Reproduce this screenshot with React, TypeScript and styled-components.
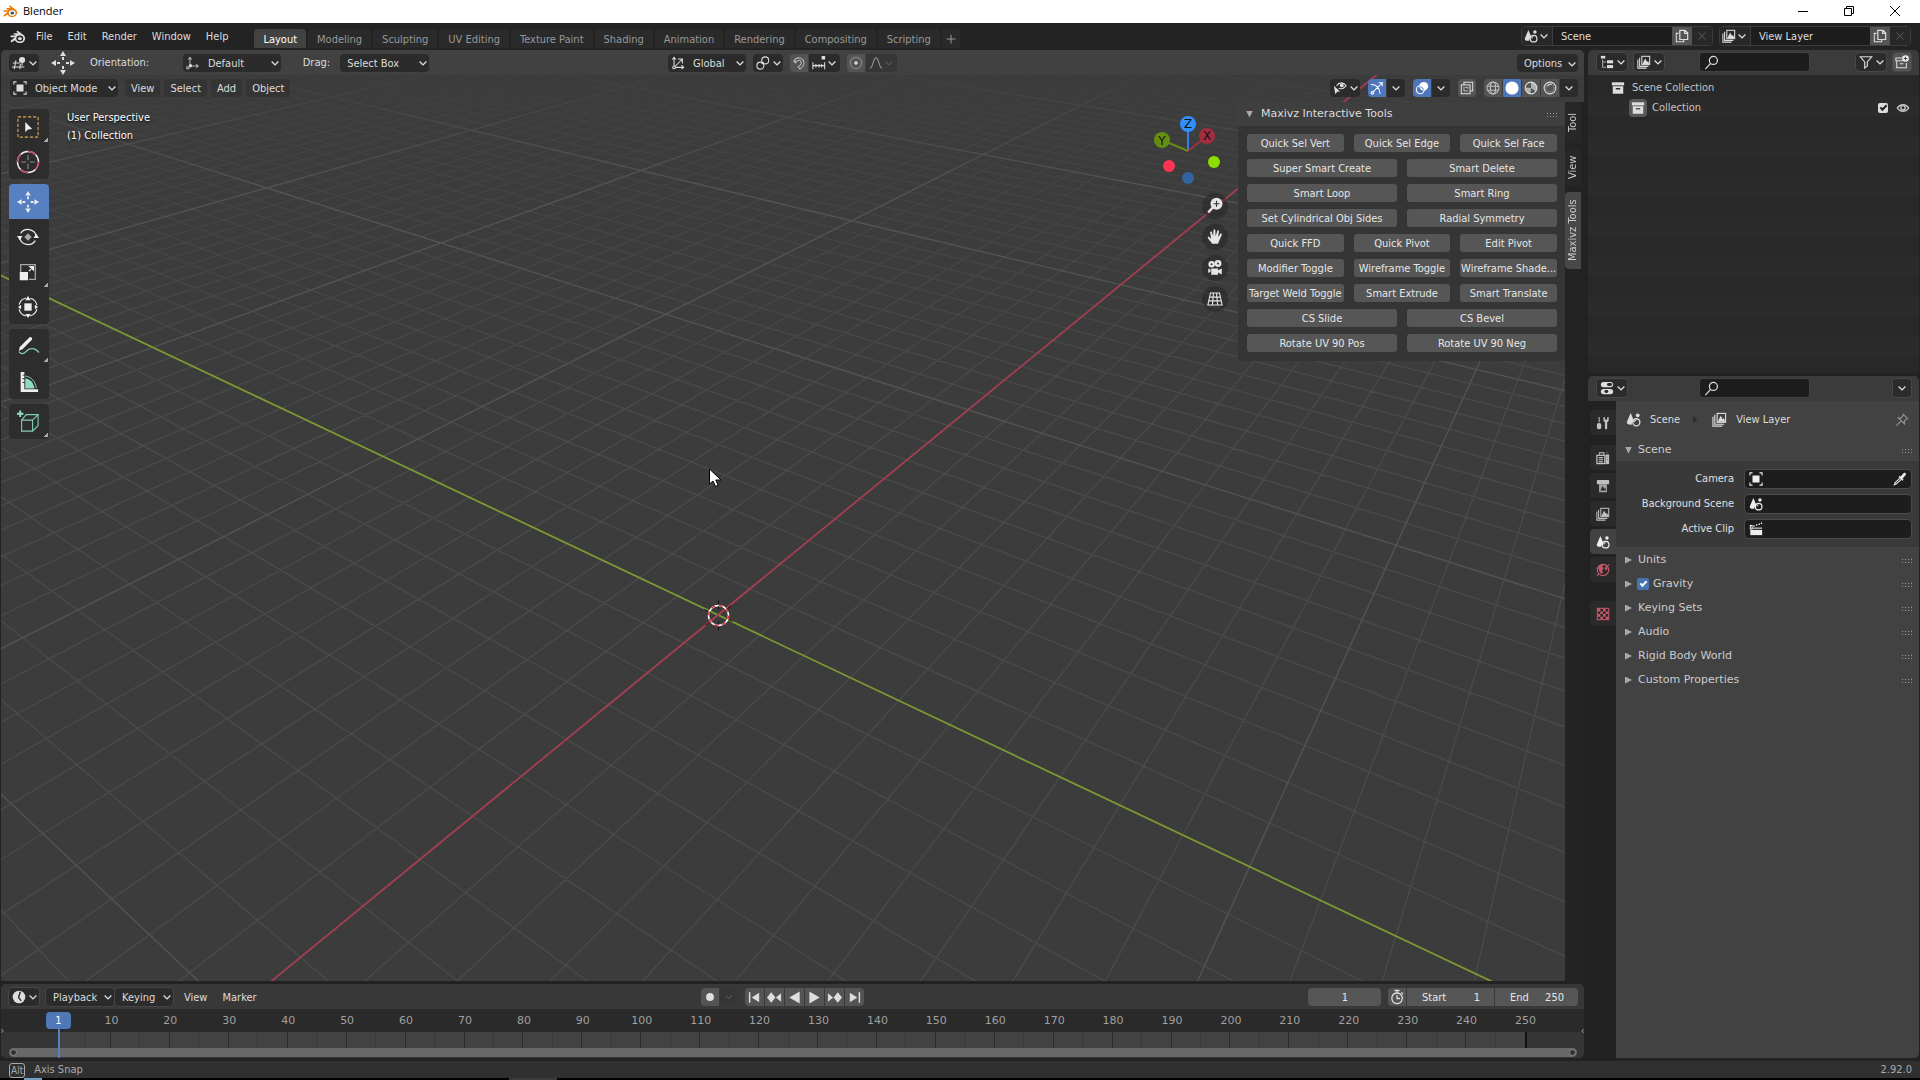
import React from 'react';
import styled, { createGlobalStyle, css } from 'styled-components';

const UI_FONT = '"DejaVu Sans Condensed", "DejaVu Sans", sans-serif';
const TITLE_FONT = '"DejaVu Sans", sans-serif';

const GlobalStyle = createGlobalStyle`
  *, *::before, *::after { box-sizing: border-box; }
  html, body, #root { height: 100%; margin: 0; }
  body { background: #000; overflow: hidden; }
  button, input, select { font: inherit; color: inherit; margin: 0; padding: 0; border: 0; background: none; }
  input { min-width: 0; outline: none; }
`;

/* ---------- icons ---------- */

const IconSvg = styled.svg<{ $size: number }>`
  display: block;
  flex: none;
  width: ${p => p.$size}px;
  height: ${p => p.$size}px;
`;

type IconProps = { name: string; size?: number };

const L = { fill: 'none', stroke: 'currentColor', strokeWidth: 1.2 } as const;

const glyphs: Record<string, React.ReactNode> = {
  blender: (
    <>
      <path d="M5 8.200 1 11.600c-1 .9.2 2.200 1.200 1.500L4.800 11.200A5.400 4.700 0 1 0 12.500 5.300L8 1.900c-1-.7-2 .5-1.100 1.300L8.300 4.300H4.200c-1 0-1 1.500 0 1.500H6L5.200 6.600H1.200c-1.200 0-1.200 1.600 0 1.600z" fill="currentColor" />
      <ellipse cx="9.800" cy="9.600" rx="3.500" ry="3" fill="var(--hole, #232323)" />
      <ellipse cx="9.900" cy="9.600" rx="2" ry="1.700" fill="var(--pupil, currentColor)" />
    </>
  ),
  chevron: <path d="M3.500 6 8 10.500 12.500 6" fill="none" stroke="currentColor" strokeWidth="1.800" />,
  viewport: (
    <g {...L}>
      <path d="M1 8h8M0 12.500h14M4.500 5 2.500 15M9.500 9 9 15" />
      <circle cx="11.500" cy="4.500" r="3.500" fill="currentColor" stroke="none" />
      <path d="M11.500 8v3" />
    </g>
  ),
  orient: (
    <g {...L}>
      <path d="M4.500 2v7M4.500 11.500h9M4.500 11.500l-3 3M2.500 4l2-2.500L6.500 4M11.500 9.500l2.500 2-2.500 2M1 11.500v3h3" opacity=".75" />
      <circle cx="5" cy="11" r="2" fill="currentColor" stroke="none" />
    </g>
  ),
  object: (
    <>
      <path d="M1 4V1h3M12 1h3v3M15 12v3h-3M4 15H1v-3" {...L} />
      <rect x="4" y="4" width="8" height="8" fill="currentColor" />
    </>
  ),
  global: (
    <g {...L}>
      <path d="M3.500 11V1.500M5 13h9.500M1.500 4l2-2.500 2 2.500M12 10.500l2.500 2.500-2.500 2M4.500 12l8-8M8 3.500h5v5" />
      <circle cx="3.500" cy="13" r="1.500" />
    </g>
  ),
  pivot: (
    <g {...L}>
      <circle cx="5" cy="11" r="4" />
      <circle cx="10.500" cy="5" r="4" />
      <circle cx="7.500" cy="8" r="1.500" fill="currentColor" stroke="none" />
    </g>
  ),
  magnet: <path d="M2 6c3-5 8-5 11-1 2 3.500 0 7-4 10l-2-2.500c3-2 4.500-4 3-6.500C8.500 4 6 4.500 4 8zM2.500 5.500l2.300 2" {...L} opacity=".75" />,
  snap: (
    <g {...L}>
      <path d="M1 7v8M4.500 9v4M8 9v4M11 9v4M14.500 7v8M1 11h13.500" />
      <rect x="11" y="0" width="4" height="4" fill="currentColor" stroke="none" />
    </g>
  ),
  prop: (
    <>
      <circle cx="8" cy="8" r="6.500" {...L} opacity=".4" />
      <circle cx="8" cy="8" r="2" fill="currentColor" />
    </>
  ),
  falloff: <path d="M1 14c4 0 3.500-12 7-12s3 12 7 12" {...L} stroke="#999" />,
  visibility: (
    <>
      <path d="M4 5.500C7 1 12 1 15 5.500 12 9 8 9 6.500 8.500" {...L} />
      <circle cx="10" cy="5" r="2.200" fill="currentColor" />
      <path d="M1 5.500 8 12l-3.200.3L2.600 15z" fill="currentColor" />
    </>
  ),
  gizmo: <path d="M1 4c6 0 10 4 10.500 10.500M3 13 14 2M10 2h4v4M1.200 13.500a1.500 1.500 0 1 0 3 0 1.500 1.500 0 1 0-3 0" {...L} />,
  overlay: (
    <>
      <circle cx="6" cy="10" r="4.500" {...L} />
      <circle cx="10" cy="6" r="5" fill="currentColor" />
      <path d="M6 6.500A4.500 4.500 0 0 1 9.800 10" fill="none" stroke="#4772b3" />
    </>
  ),
  xray: (
    <g {...L}>
      <path d="M4.500 4.500V1.500h10v10h-3" />
      <rect x="1.500" y="4.500" width="10" height="10" />
      <path d="M4.500 7v4.500H9M6 7.500h3v2" strokeDasharray="1.500 1" />
    </g>
  ),
  wire: (
    <g {...L} opacity=".8">
      <circle cx="8" cy="8" r="6.800" />
      <ellipse cx="8" cy="8" rx="3" ry="6.800" />
      <path d="M1.500 6h13M1.500 10.500h13" />
    </g>
  ),
  solid: <circle cx="8" cy="8" r="7.500" fill="currentColor" />,
  material: (
    <>
      <circle cx="8" cy="8" r="6.700" {...L} />
      <path d="M8 1.300V8l5.500 4A6.700 6.700 0 0 0 8 1.300zM8 8l-6.500-.5a6.700 6.700 0 0 0 6 7z" fill="currentColor" opacity=".7" />
    </>
  ),
  rendered: (
    <>
      <circle cx="8" cy="8" r="6.700" {...L} />
      <circle cx="8" cy="8" r="4.600" fill="none" stroke="currentColor" strokeDasharray="1.500 1.200" opacity=".7" />
      <path d="M5 6c1-2 3-2.500 5-2" {...L} />
    </>
  ),
  scene: (
    <>
      <path d="M5 1 1 10.500c-.5 1.500.5 2.500 2 2.800l3 .2c.2-2 1-3.300 2.500-4z" fill="currentColor" />
      <circle cx="12.500" cy="3.500" r="2" fill="currentColor" />
      <circle cx="11" cy="11" r="3.800" {...L} strokeWidth={1.4} />
      <path d="M8.800 10.800a2.200 2.200 0 0 1 2-2" {...L} />
    </>
  ),
  layers: (
    <>
      <path d="M1 5v10h10M3 3v10h10" {...L} />
      <rect x="5.500" y="1.500" width="9" height="9.500" {...L} />
      <path d="M6 10.500 9.300 4l2.200 4 1-1.500 1.800 4z" fill="currentColor" />
    </>
  ),
  copy: (
    <>
      <path d="M4 5H1.500v9.500H10V12" {...L} />
      <path d="M5.500 1.500h6l3 3V12h-9zM11 1v4h4" {...L} strokeWidth={1.4} />
    </>
  ),
  close: <path d="m4 4 8 8M12 4l-8 8" {...L} />,
  plus: <path d="M8 3v10M3 8h10" {...L} />,
  outliner: (
    <>
      <rect x="1" y="1" width="5" height="3" fill="currentColor" />
      <path d="M3 5v9h4M3 8h4" {...L} opacity=".7" />
      <rect x="8" y="6" width="7" height="3.500" fill="currentColor" />
      <rect x="8" y="11.500" width="7" height="3.500" fill="currentColor" />
    </>
  ),
  search: (
    <g {...L} strokeWidth={1.3}>
      <circle cx="10" cy="5.800" r="4.300" />
      <path d="m7 9-5.500 6" />
    </g>
  ),
  filter: <path d="M1.500 2h13L9.500 8v4.500L6.500 15V8z" {...L} strokeWidth={1.3} />,
  newcol: (
    <>
      <path d="M9 3.500H1v3h8M2 6.500v8h11V9M5.500 10h4" {...L} />
      <circle cx="12" cy="4" r="3.800" fill="#eee" />
      <path d="M12 2v4M10 4h4" stroke="#333" />
    </>
  ),
  collection: (
    <>
      <rect x="1" y="1.500" width="14" height="3.500" fill="currentColor" />
      <path d="M2 6h12v8.500H2zM5.500 8v1.800h5V8z" fill="currentColor" fillRule="evenodd" />
    </>
  ),
  eye: (
    <>
      <path d="M1.500 8C4.500 3 11.500 3 14.500 8c-3 5-10 5-13 0z" {...L} strokeWidth={1.6} />
      <circle cx="8" cy="7.800" r="2.500" {...L} strokeWidth={1.6} />
    </>
  ),
  properties: (
    <>
      <rect x="1" y="1" width="14" height="6" rx="3" fill="currentColor" />
      <rect x="1" y="9" width="14" height="6" rx="3" fill="currentColor" />
      <rect x="8" y="2.300" width="5.800" height="3.400" rx="1.700" fill="#2b2b2b" />
      <rect x="5" y="10.300" width="4.500" height="3.400" rx="1.700" fill="#2b2b2b" />
    </>
  ),
  pin: <path d="m9.500 1.500 5 5-1.500.5-2.500 2.500.3 3-7-7 3 .3L9 3zM6.500 9.500l-5 5" {...L} />,
  dropper: (
    <>
      <path d="m8 6 4-4.500c2-1.500 3.500.5 2.500 2L10.500 8z" fill="currentColor" />
      <path d="m7 5 4.500 4.500" stroke="currentColor" strokeWidth="1.800" />
      <path d="M8 7 2.500 12l-1 2.500 2.500-1L9.500 8.500" {...L} />
    </>
  ),
  clip: (
    <>
      <rect x="1.500" y="4" width="2" height="4" {...L} />
      <path d="M5 4.500h1.500M8 3.500h1.500M11 2.500h1.500M13.500 1.500H15" stroke="currentColor" strokeWidth="1.800" />
      <path d="M4 7h11" {...L} />
      <rect x="1.500" y="9" width="13.500" height="6" fill="currentColor" />
    </>
  ),
  tools: (
    <>
      <path d="M3 1h1.200v6H3z" fill="currentColor" />
      <rect x="1" y="8" width="5" height="7" rx="2" fill="currentColor" />
      <path d="M8.500 1v3.500c0 1.500 1 2 1.700 2.500v7c0 1.500 2.600 1.500 2.600 0V7c1-.5 1.700-1 1.700-2.500V1l-1.700.5V4h-2.600V1.500z" fill="currentColor" />
    </>
  ),
  render: (
    <>
      <path d="M1 5h9v9.500H1zM4 4V2h5v2M3 7.500h5M3 10h5M3 12.500h5" {...L} strokeWidth={1.4} />
      <rect x="11" y="4" width="4" height="11" fill="currentColor" />
      <path d="M12 7h2M12 10h2M12 1.500h2" stroke="#777" />
    </>
  ),
  output: (
    <>
      <rect x="1" y="1" width="14" height="5" rx="1" fill="currentColor" />
      <path d="M3.500 6v9h9V6z" fill="currentColor" opacity=".8" />
      <path d="m5 13 2.500-5 2 3 1-1 1 3z" fill="#2b2b2b" />
    </>
  ),
  world: (
    <>
      <circle cx="8" cy="8" r="6.500" {...L} strokeWidth={1.3} />
      <path d="M3 4c2-2 4-2.500 5-2L7.300 4.500 9 6 7 8l1 3-1.500 1.500C5 11 2 8 3 4zM10.500 4l2.500 1-.5 3.500L10 7z" fill="currentColor" />
      <path d="m1 14.500 2-2M13 3.500l2-2" {...L} />
    </>
  ),
  texture: (
    <>
      <rect x="1.500" y="1.500" width="13" height="13" {...L} />
      <path d="M2 2h3v3H2zM8 2h3v3H8zM5 5h3v3H5zM11 5h3v3h-3zM2 8h3v3H2zM8 8h3v3H8zM5 11h3v3H5zM11 11h3v3h-3z" fill="currentColor" />
    </>
  ),
  clock: (
    <>
      <circle cx="8" cy="8" r="7.200" fill="currentColor" />
      <path d="M9.500 2 7.500 8.500l3 4" fill="none" stroke="#2b2b2b" strokeWidth="1.600" />
    </>
  ),
  stopwatch: <path d="M8 4a5.300 5.300 0 1 0 .1 0M8 4V1.500M5.500 1.500h5M8 6v3.500h3M12.500 3.500l1.500 1.500" {...L} strokeWidth={1.3} />,
  dot: <circle cx="8" cy="8" r="4.500" fill="currentColor" />,
  first: <path d="M2 2.500h1.600v11H2zM13 3v10L5 8z" fill="currentColor" />,
  prevkey: <path d="m4.500 2.500 4.500 5.500-4.500 5.500L0 8zM15 3.500v9L9.500 8z" fill="currentColor" />,
  playback: <path d="M13.500 1.500v13L2.500 8z" fill="currentColor" />,
  play: <path d="M2.500 1.500v13l11-6.500z" fill="currentColor" />,
  nextkey: <path d="M11.500 2.500 16 8l-4.500 5.500L7 8zM1 3.500v9L6.500 8z" fill="currentColor" />,
  last: <path d="M12.400 2.500H14v11h-1.600zM3 3v10l8-5z" fill="currentColor" />,
  selectbox: (
    <>
      <rect x="1" y="1" width="22" height="22" fill="none" stroke="#d9a94c" strokeWidth="1.200" strokeDasharray="3.500 2" />
      <path d="M9 6.500v11l3-2.800 4.500-.4z" fill="currentColor" />
    </>
  ),
  cursor3d: (
    <>
      <circle cx="12" cy="12" r="11.500" fill="none" stroke="#eee" strokeWidth="1.500" />
      <circle cx="12" cy="12" r="11.500" fill="none" stroke="#c0405a" strokeWidth="1.500" strokeDasharray="9 9" />
      <path d="M12 4.500V10M12 14v5.500M4.500 12H10M14 12h5.500" fill="none" stroke="#8a8a8a" strokeWidth="1.300" />
    </>
  ),
  move: <path d="M12 0l3 5H9zM12 24l3-5H9zM0 12l5-3v6zM24 12l-5-3v6zM11 6h2v3h-2zM11 15h2v3h-2zM6 11h3v2H6zM15 11h3v2h-3z" fill="currentColor" />,
  rotate: (
    <>
      <path d="M4 8a9.500 9.500 0 0 1 17 2.500M20 16a9.500 9.500 0 0 1-17-2.500" fill="none" stroke="currentColor" strokeWidth="1.300" />
      <path d="M0 11h6l-3 4.500zM18 13h6l-3-4.500z" fill="currentColor" />
      <path d="m12 8 4 4-4 4-4-4z" fill="#aaa" />
    </>
  ),
  scale: (
    <>
      <path d="M4 12V4h16v16h-7" fill="none" stroke="#aaa" strokeWidth="1.300" />
      <path d="m13 11 4-4M14 6h4v4z" stroke="currentColor" fill="currentColor" strokeWidth="1.300" />
      <rect x="3" y="12" width="9" height="9" fill="currentColor" />
    </>
  ),
  transform: (
    <>
      <circle cx="12" cy="12" r="10" fill="none" stroke="currentColor" strokeWidth="1.200" strokeDasharray="10.700 5" strokeDashoffset="-2.500" />
      <path d="m12 0 3 4.500H9zM12 24l3-4.500H9zM1 12l3.500-2.500v5zM23 12l-3.500-2.500v5z" fill="currentColor" />
      <rect x="8" y="8" width="8" height="8" fill="currentColor" />
    </>
  ),
  annotate: (
    <>
      <path d="m2 16 1-4L13.500 1.500c1.500-1.300 4 1 2.800 2.600L6 14.500z" fill="currentColor" />
      <path d="M2 17c5 6 8-2 12-3s6 0 10 4" fill="none" stroke="#7fcfae" strokeWidth="1.400" />
    </>
  ),
  measure: (
    <>
      <path d="M4 1h4v3H6v1h2v3H6v1h2v3H6v1h2v7h15v3H4z" fill="currentColor" />
      <path d="M9 8c6 1 9 5 10 11H9z" fill="#8fdcbc" />
      <path d="M9 5.500c7 1 11 6 12 13" fill="none" stroke="#8fdcbc" strokeWidth="1" />
    </>
  ),
  addcube: (
    <>
      <path d="M5 10h12v12H5zM5 10l5-6h13l-6 6M23 4v12l-6 6" fill="none" stroke="#7fcfae" strokeWidth="1.200" />
      <path d="M0 3h7M3.500-.5v7" stroke="#8fe3c0" strokeWidth="2" />
    </>
  ),
  zoom: (
    <>
      <circle cx="14" cy="9" r="8" fill="currentColor" />
      <path d="m9 14-6 6.500" stroke="currentColor" strokeWidth="3.200" />
      <path d="M14 5v8M10 9h8" stroke="#333" strokeWidth="1.500" />
    </>
  ),
  hand: <path d="M8 21c-1-3-4-5-5.500-7.500-.8-1.500 1-2.500 2.200-1.300L7 14.500 5.500 6c-.2-1.600 2-2 2.400-.5L9.500 11 10 3c.1-1.600 2.300-1.600 2.400 0l.4 8L15 4c.5-1.500 2.600-1 2.300.6L16 12l3-4c1-1.300 2.800-.2 2 1.200L18 16l-2 5z" fill="currentColor" />,
  camera: (
    <>
      <circle cx="7.500" cy="7" r="4.300" fill="currentColor" />
      <circle cx="16" cy="6" r="4.600" fill="currentColor" />
      <circle cx="7.500" cy="7" r="1.300" fill="#333" />
      <circle cx="16" cy="6" r="1.400" fill="#333" />
      <path d="M7 12.500h9V15l5-2.500v8L16 18v3H7zM3 12.500l3 1.500v3l-3 1.500z" fill="currentColor" />
    </>
  ),
  gridview: <path d="M6 4h12l3.500 16h-19zM5 9.500h14M4 14.500h16M10 4 8.500 20M14 4l1.500 16" fill="none" stroke="currentColor" strokeWidth="1.500" />,
};

const BIG = new Set(['selectbox', 'cursor3d', 'move', 'rotate', 'scale', 'transform', 'annotate', 'measure', 'addcube', 'zoom', 'hand', 'camera', 'gridview']);

const Icon = ({ name, size = 14 }: IconProps) => (
  <IconSvg $size={size} viewBox={BIG.has(name) ? '0 0 24 24' : '0 0 16 16'} overflow="visible" aria-hidden="true">
    {glyphs[name]}
  </IconSvg>
);

/* ---------- window frame ---------- */

const Page = styled.div`
  display: grid;
  grid-template-rows: 23px 27px minmax(0, 1fr) 17px 2px;
  height: 100vh;
  background: #222;
  color: #ddd;
  font: 11px/16px ${UI_FONT};
`;

const TitleBar = styled.header`
  display: flex;
  align-items: center;
  gap: 5px;
  padding: 0 2px 1px 3px;
  background: #fff;
  color: #000;
  font: 11px/16px "Open Sans", sans-serif;
`;

const OrangeLogo = styled.span`
  color: #e87d0d;
  --hole: #fff;
  --pupil: #265787;
`;

const WindowButtons = styled.div`
  display: flex;
  margin-left: auto;
`;

const WindowButton = styled.button`
  display: grid;
  place-items: center;
  width: 46px;
  height: 20px;
`;

const TopBar = styled.div`
  display: flex;
  align-items: center;
  padding: 0 9px 0 10px;
  background: #232323;
`;

const AppMenu = styled.nav`
  display: flex;
  align-self: flex-start;
  margin-left: 2px;
`;

const MenuButton = styled.button`
  height: 26px;
  padding: 2px 7px 0 8px;
`;

const Workspaces = styled.div`
  display: flex;
  align-self: flex-end;
  gap: 2px;
  margin: 0 0 2px 19px;
`;

const Workspace = styled.button<{ $active?: boolean }>`
  height: 19px;
  padding: 2px 9px 0;
  border-radius: 4px 4px 0 0;
  background: ${p => (p.$active ? '#424242' : '#2a2a2a')};
  color: ${p => (p.$active ? '#fff' : '#989898')};
`;

const AddWorkspace = styled(Workspace)`
  padding: 0 2px;
`;

const IdBlocks = styled.div`
  display: flex;
  gap: 6px;
  margin: 0 0 1px auto;
`;

const IdBlock = styled.div`
  display: flex;
  height: 20px;
  border: 1px solid #3d3d3d;
  border-radius: 4px;
  background: #1d1d1d;
  overflow: hidden;
`;

const IdInput = styled.input`
  width: 120px;
  padding: 1px 8px 0;
  border-left: 1px solid #3d3d3d;
`;

const IdButton = styled.button<{ $dim?: boolean; $wide?: boolean }>`
  display: flex;
  align-items: center;
  justify-content: center;
  width: ${p => (p.$wide ? 30 : 20)}px;
  background: ${p => (p.$dim || p.$wide ? '#282828' : '#545454')};
  color: ${p => (p.$dim ? '#555' : '#ddd')};
`;

/* ---------- shared widgets ---------- */

const darkBox = css`
  height: 18px;
  border-radius: 4px;
  background: #2b2b2b;
  color: #ddd;
`;

const Drop = styled.span<{ $w: number; $outlined?: boolean }>`
  ${darkBox}
  display: flex;
  align-items: center;
  width: ${p => p.$w}px;
  padding: 0 0 0 3px;
  box-shadow: ${p => (p.$outlined ? '0 0 0 1px #454545' : 'none')};
`;

const DropSelect = styled.select<{ $indent: number }>`
  flex: 1;
  min-width: 0;
  height: 18px;
  padding: 2px 0 0 ${p => p.$indent}px;
  appearance: none;
  outline: none;
`;

const IconDrop = styled.button<{ $outlined?: boolean }>`
  ${darkBox}
  display: flex;
  flex: none;
  align-items: center;
  justify-content: space-between;
  width: 30px;
  padding: 0 0 0 3px;
  box-shadow: ${p => (p.$outlined ? '0 0 0 1px #484848' : 'none')};
`;

const Joined = styled.div`
  display: flex;
  gap: 1px;
  height: 18px;
  border-radius: 4px;
  overflow: hidden;
`;

type Tone = 'dark' | 'grey' | 'blue' | 'dim';
const tones: Record<Tone, string> = { dark: '#2b2b2b', grey: '#545454', blue: '#4f76bb', dim: '#363636' };
const inks: Record<Tone, string> = { dark: '#ddd', grey: '#ddd', blue: '#fff', dim: '#555' };

const Cell = styled.button<{ $tone: Tone; $w?: number }>`
  display: flex;
  align-items: center;
  justify-content: center;
  width: ${p => p.$w ?? 18}px;
  height: 18px;
  background: ${p => tones[p.$tone]};
  color: ${p => inks[p.$tone]};
`;

const Search = styled.label`
  display: flex;
  align-items: center;
  width: 109px;
  height: 18px;
  padding-left: 4px;
  border-radius: 3px;
  background: #1d1d1d;
  box-shadow: 0 0 0 1px #414141;
`;

const SearchInput = styled.input`
  flex: 1;
`;

const LabeledDrop = ({ label, w, icon, indent, options, outlined }: { label: string; w: number; icon?: string; indent: number; options: string[]; outlined?: boolean }) => (
  <Drop $w={w} $outlined={outlined}>
    {icon && <Icon name={icon} />}
    <DropSelect aria-label={label} $indent={indent}>
      {options.map(o => <option key={o}>{o}</option>)}
    </DropSelect>
    <Icon name="chevron" size={12} />
  </Drop>
);

const IconDropdown = ({ label, icon, outlined }: { label: string; icon: string; outlined?: boolean }) => (
  <IconDrop aria-label={label} aria-haspopup="menu" $outlined={outlined}>
    <Icon name={icon} />
    <Icon name="chevron" size={12} />
  </IconDrop>
);

/* ---------- workspace split ---------- */

const Workarea = styled.main`
  display: grid;
  grid-template-columns: minmax(0, 1fr) 331px;
  gap: 4px;
  padding: 0 1px 3px 1px;
`;

const LeftColumn = styled.div`
  display: grid;
  grid-template-rows: minmax(0, 1fr) 74px;
  gap: 3px;
  min-width: 0;
`;

const Viewport = styled.section`
  position: relative;
  display: flex;
  flex-direction: column;
  border-radius: 5px 5px 0 0;
  background: #3c3c3c;
  overflow: hidden;
`;

const Scene3D = styled.svg`
  position: absolute;
  inset: 0;
  width: 100%;
  height: 100%;
`;

const ToolHeader = styled.div`
  position: relative;
  display: flex;
  align-items: center;
  height: 25px;
  padding: 1px 6px 0 8px;
  background: rgba(66, 66, 66, 0.96);
`;

const ModeHeader = styled.div`
  position: relative;
  display: flex;
  align-items: center;
  height: 27px;
  padding: 0 6px 1px 9px;
`;

const ToolSettings = styled.div`
  display: flex;
  align-items: center;
  width: 420px;
  color: #ddd;
`;

const ToolGlyph = styled.span`
  margin: 0 14px 0 12px;
`;

const OrientationLabel = styled.span`
  width: 94px;
  padding-left: 1px;
`;

const DragLabel = styled.span`
  margin: 0 10px 0 22px;
`;

const CenterTools = styled.div`
  display: flex;
  gap: 7px;
  margin: 0 auto 0 239px;
`;

const OptionsButton = styled.button`
  ${darkBox}
  display: flex;
  align-items: center;
  justify-content: space-between;
  width: 61px;
  padding: 1px 0 0 7px;
`;

const ViewMenus = styled.div`
  display: flex;
  gap: 4px;
  margin: 0 auto 0 7px;
`;

const ViewMenu = styled.button`
  height: 18px;
  padding: 2px 6px 0;
  border-radius: 3px;
  background: rgba(43, 43, 43, 0.5);
`;

const ViewTools = styled.div`
  display: flex;
  gap: 8px;
`;

const ViewBody = styled.div`
  position: relative;
  display: flex;
  flex: 1;
  min-height: 0;
`;

const Toolbar = styled.div`
  display: flex;
  flex-direction: column;
  gap: 5px;
  width: 40px;
  margin: 7px 0 0 8px;
`;

const ToolGroup = styled.div`
  border-radius: 4px;
  background: #2d2d2d;
  overflow: hidden;
`;

const ToolButton = styled.button<{ $active?: boolean; $more?: boolean }>`
  display: grid;
  place-items: center;
  width: 40px;
  height: 35px;
  padding-right: 2px;
  background: ${p => (p.$more ? 'linear-gradient(135deg, transparent 50%, #aaa 50%) 35px 29px / 4px 4px no-repeat' : 'none')};
  background-color: ${p => (p.$active ? '#5680c2' : 'transparent')};
  color: #eee;
`;

const ViewInfo = styled.div`
  flex: 1;
  padding: 7px 0 0 18px;
  color: #fff;
  line-height: 18px;
  text-shadow: 0 1px 2px #000;
`;

const GizmoColumn = styled.div`
  display: flex;
  flex-direction: column;
  align-items: flex-end;
  gap: 5px;
  padding: 8px 10px 0 0;
`;

const AxisGizmo = styled.svg`
  width: 80px;
  height: 78px;
  font: 12px ${TITLE_FONT};
`;

const NavButton = styled.button`
  display: grid;
  place-items: center;
  width: 26px;
  height: 26px;
  border-radius: 50%;
  background: rgba(30, 30, 30, 0.4);
  color: #e6e6e6;
`;

const NPanel = styled.aside`
  align-self: flex-start;
  width: 327px;
  background: #353535;
`;

const PanelTitle = styled.h2`
  display: flex;
  align-items: center;
  gap: 8px;
  height: 24px;
  margin: 0;
  padding: 0 8px;
  background: #3f3f3f;
  color: #ddd;
  font: 11px/16px ${TITLE_FONT};
`;

const Triangle = styled.span<{ $open?: boolean }>`
  width: 7px;
  height: 7px;
  background: #aaa;
  clip-path: ${p => (p.$open ? 'polygon(0 0, 100% 0, 50% 100%)' : 'polygon(0 0, 100% 50%, 0 100%)')};
`;

const Grip = styled.span`
  width: 11px;
  height: 5px;
  margin-left: auto;
  background: radial-gradient(circle, #999 0 1px, transparent 1px) 0 0 / 3px 3px;
`;

const ToolRows = styled.div`
  display: flex;
  flex-direction: column;
  gap: 7px;
  padding: 8px 8px 9px 9px;
`;

const ToolRow = styled.div<{ $cols: number }>`
  display: grid;
  grid-template-columns: repeat(${p => p.$cols}, minmax(0, 1fr));
  gap: 10px;
`;

const OperatorButton = styled.button`
  height: 18px;
  padding-top: 2px;
  border-radius: 3px;
  background: #565656;
  color: #e6e6e6;
  white-space: nowrap;
  overflow: hidden;
`;

const SideTabs = styled.div`
  display: flex;
  flex-direction: column;
  width: 19px;
  gap: 6px;
  background: #232323;
`;

const SideTab = styled.button<{ $active?: boolean; $h: number }>`
  width: 16px;
  height: ${p => p.$h}px;
  border-radius: 0 4px 4px 0;
  background: ${p => (p.$active ? '#484848' : '#272727')};
  color: #ccc;
  writing-mode: vertical-rl;
  transform: rotate(180deg);
  text-align: center;
`;

const Pointer = styled.svg`
  position: absolute;
  left: 707px;
  top: 418px;
  width: 14px;
  height: 20px;
`;

/* Ground plane projected through a fixed perspective camera. */
const project = (u: number, v: number) => {
  const w = 1 - 0.0227 * u + 0.032 * v;
  return `${((718 + 24.8 * u + 56 * v) / w).toFixed(1)} ${((615 + 5.5 * u - 7.4 * v) / w).toFixed(1)}`;
};
const alongV = (u: number) => `M${project(u, (-0.8 + 0.0227 * u) / 0.032)}L${project(u, 600)}`;
const alongU = (v: number) => `M${project((0.8 + 0.032 * v) / 0.0227, v)}L${project(-800, v)}`;
const range = (a: number, b: number, step: number) => Array.from({ length: Math.floor((b - a) / step) + 1 }, (_, i) => a + i * step);
const notAxis = (n: number) => n !== 0;
const minorPath = range(-80, 60, 1).filter(n => n % 10).map(alongV).join('') + range(-40, 70, 1).filter(n => n % 10).map(alongU).join('');
const majorPath = range(-160, 60, 10).filter(notAxis).map(alongV).join('') + range(-40, 160, 10).filter(notAxis).map(alongU).join('');

const GroundGrid = () => (
  <Scene3D viewBox="1 50 1583 931" preserveAspectRatio="xMinYMin slice" aria-hidden="true">
    <defs>
      <linearGradient id="fade" gradientUnits="userSpaceOnUse" x1="0" y1="60" x2="0" y2="420">
        <stop offset="0" stopColor="#fff" stopOpacity="0" />
        <stop offset=".2" stopColor="#fff" stopOpacity=".4" />
        <stop offset="1" stopColor="#fff" />
      </linearGradient>
      <linearGradient id="fadeMajor" gradientUnits="userSpaceOnUse" x1="0" y1="60" x2="0" y2="180">
        <stop offset="0" stopColor="#fff" stopOpacity="0" />
        <stop offset="1" stopColor="#fff" />
      </linearGradient>
      <mask id="minorMask" maskUnits="userSpaceOnUse" x="0" y="0" width="1920" height="1080"><rect width="1920" height="1080" fill="url(#fade)" /></mask>
      <mask id="majorMask" maskUnits="userSpaceOnUse" x="0" y="0" width="1920" height="1080"><rect width="1920" height="1080" fill="url(#fadeMajor)" /></mask>
    </defs>
    <g mask="url(#minorMask)"><path d={minorPath} stroke="#4a4a4a" strokeWidth="1.400" fill="none" /></g>
    <g mask="url(#majorMask)"><path d={majorPath} stroke="#525252" strokeWidth="1.500" fill="none" /></g>
    <path d={alongU(0)} stroke="#7b9a33" strokeWidth="1.800" />
    <path d={alongV(0)} stroke="#a33f51" strokeWidth="1.800" />
    <g transform="translate(718.500 615.500)" fill="none">
      <path d="M0-15v9M0 6v9M13-10l-5 4M-13 10l5-4M-14-6l6 3M14 6 8 3" stroke="#111" />
      <circle r="10" stroke="#fff" strokeWidth="1.500" />
      <circle r="10" stroke="#e0303a" strokeWidth="1.500" strokeDasharray="3.930 3.930" />
    </g>
  </Scene3D>
);

const toolRows = [
  ['Quick Sel Vert', 'Quick Sel Edge', 'Quick Sel Face'],
  ['Super Smart Create', 'Smart Delete'],
  ['Smart Loop', 'Smart Ring'],
  ['Set Cylindrical Obj Sides', 'Radial Symmetry'],
  ['Quick FFD', 'Quick Pivot', 'Edit Pivot'],
  ['Modifier Toggle', 'Wireframe Toggle', 'Wireframe Shade...'],
  ['Target Weld Toggle', 'Smart Extrude', 'Smart Translate'],
  ['CS Slide', 'CS Bevel'],
  ['Rotate UV 90 Pos', 'Rotate UV 90 Neg'],
];

const toolbarGroups = [
  [{ n: 'selectbox', l: 'Select Box', more: true }, { n: 'cursor3d', l: 'Cursor' }],
  [{ n: 'move', l: 'Move', active: true }, { n: 'rotate', l: 'Rotate' }, { n: 'scale', l: 'Scale', more: true }, { n: 'transform', l: 'Transform' }],
  [{ n: 'annotate', l: 'Annotate', more: true }, { n: 'measure', l: 'Measure' }],
  [{ n: 'addcube', l: 'Add Cube', more: true }],
] as { n: string; l: string; more?: boolean; active?: boolean }[][];

const ViewportEditor = () => (
  <Viewport>
    <GroundGrid />
    <ToolHeader>
      <ToolSettings>
        <IconDropdown label="Editor type" icon="viewport" />
        <ToolGlyph><Icon name="move" size={24} /></ToolGlyph>
        <OrientationLabel>Orientation:</OrientationLabel>
        <LabeledDrop label="Orientation" w={98} icon="orient" indent={8} options={['Default']} />
        <DragLabel>Drag:</DragLabel>
        <LabeledDrop label="Drag" w={89} indent={4} options={['Select Box']} />
      </ToolSettings>
      <CenterTools>
        <LabeledDrop label="Transform orientation" w={78} icon="global" indent={8} options={['Global']} />
        <IconDropdown label="Pivot point" icon="pivot" />
        <Joined>
          <Cell $tone="grey" aria-label="Snap"><Icon name="magnet" /></Cell>
          <Cell $tone="dark" $w={31} aria-label="Snap to"><Icon name="snap" /><Icon name="chevron" size={12} /></Cell>
        </Joined>
        <Joined>
          <Cell $tone="grey" aria-label="Proportional editing"><Icon name="prop" /></Cell>
          <Cell $tone="dim" $w={31} aria-label="Falloff"><Icon name="falloff" /><Icon name="chevron" size={12} /></Cell>
        </Joined>
      </CenterTools>
      <OptionsButton>Options<Icon name="chevron" size={12} /></OptionsButton>
    </ToolHeader>
    <ModeHeader>
      <LabeledDrop label="Mode" w={108} icon="object" indent={8} options={['Object Mode']} />
      <ViewMenus>
        {['View', 'Select', 'Add', 'Object'].map(m => <ViewMenu key={m}>{m}</ViewMenu>)}
      </ViewMenus>
      <ViewTools>
        <IconDropdown label="Object visibility" icon="visibility" />
        <Joined>
          <Cell $tone="blue" aria-label="Gizmos"><Icon name="gizmo" /></Cell>
          <Cell $tone="dark" aria-label="Gizmo options"><Icon name="chevron" size={12} /></Cell>
        </Joined>
        <Joined>
          <Cell $tone="blue" aria-label="Overlays"><Icon name="overlay" /></Cell>
          <Cell $tone="dark" aria-label="Overlay options"><Icon name="chevron" size={12} /></Cell>
        </Joined>
        <Joined>
          <Cell $tone="grey" aria-label="X-ray"><Icon name="xray" /></Cell>
        </Joined>
        <Joined>
          <Cell $tone="grey" aria-label="Wireframe"><Icon name="wire" /></Cell>
          <Cell $tone="blue" aria-label="Solid"><Icon name="solid" /></Cell>
          <Cell $tone="grey" aria-label="Material preview"><Icon name="material" /></Cell>
          <Cell $tone="grey" aria-label="Rendered"><Icon name="rendered" /></Cell>
          <Cell $tone="dark" aria-label="Shading options"><Icon name="chevron" size={12} /></Cell>
        </Joined>
      </ViewTools>
    </ModeHeader>
    <ViewBody>
      <Toolbar>
        {toolbarGroups.map((group, i) => (
          <ToolGroup key={i}>
            {group.map(t => (
              <ToolButton key={t.n} aria-label={t.l} $active={t.active} $more={t.more}><Icon name={t.n} size={22} /></ToolButton>
            ))}
          </ToolGroup>
        ))}
      </Toolbar>
      <ViewInfo>User Perspective<br />(1) Collection</ViewInfo>
      <GizmoColumn>
        <AxisGizmo viewBox="1148 110 80 78" overflow="visible">
          <path d="M1188 151V124" stroke="#2f83e3" strokeWidth="2" />
          <path d="M1188 151l19-15" stroke="#a33145" strokeWidth="2" />
          <path d="M1188 151l-26-11" stroke="#648e12" strokeWidth="2" />
          <circle cx="1188" cy="124" r="8" fill="#2f8fff" />
          <circle cx="1207" cy="136" r="8" fill="#a32c41" />
          <circle cx="1162" cy="140" r="8" fill="#648e12" />
          <circle cx="1169" cy="166" r="6" fill="#ff3352" />
          <circle cx="1214" cy="162" r="6" fill="#8bdc00" />
          <circle cx="1188" cy="178" r="6" fill="#33639e" />
          <g fill="#111" textAnchor="middle">
            <text x="1188" y="128">Z</text>
            <text x="1207" y="140">X</text>
            <text x="1162" y="145">Y</text>
          </g>
        </AxisGizmo>
        {['zoom', 'hand', 'camera', 'gridview'].map(n => <NavButton key={n} aria-label={n}><Icon name={n} size={18} /></NavButton>)}
      </GizmoColumn>
      <NPanel>
        <PanelTitle><Triangle $open />Maxivz Interactive Tools<Grip /></PanelTitle>
        <ToolRows>
          {toolRows.map(row => (
            <ToolRow key={row[0]} $cols={row.length}>
              {row.map(t => <OperatorButton key={t}>{t}</OperatorButton>)}
            </ToolRow>
          ))}
        </ToolRows>
      </NPanel>
      <SideTabs>
        <SideTab $h={41}>Tool</SideTab>
        <SideTab $h={37}>View</SideTab>
        <SideTab $h={77} $active>Maxivz Tools</SideTab>
      </SideTabs>
    </ViewBody>
    <Pointer viewBox="0 0 14 20" aria-hidden="true">
      <path d="M1.500 1v15l3.500-3 2.600 5.500 2.600-1.200L7.800 12H13z" fill="#fff" stroke="#000" />
    </Pointer>
  </Viewport>
);

/* ---------- timeline ---------- */

const Timeline = styled.section`
  position: relative;
  display: flex;
  flex-direction: column;
  border-radius: 5px;
  background: #353535;
  overflow: hidden;
`;

const TimelineHeader = styled.div`
  display: flex;
  flex: none;
  align-items: center;
  height: 25px;
  padding: 1px 6px 0 8px;
  background: #383838;
`;

const TimelineMenus = styled.div`
  display: flex;
  gap: 1px;
  width: 655px;
  margin-left: 7px;
`;

const PlainMenu = styled.button`
  margin-left: 6px;
  padding: 1px 4px 0;
`;

const Transport = styled.div`
  display: flex;
  gap: 7px;
  margin-right: auto;
`;

const FrameFields = styled.div`
  display: flex;
  gap: 7px;
`;

const NumberField = styled.label<{ $w: number; $solo?: boolean }>`
  display: flex;
  align-items: center;
  width: ${p => p.$w}px;
  height: 18px;
  padding: 1px 14px 0 15px;
  border-radius: ${p => (p.$solo ? 4 : 0)}px;
  background: #565656;
  color: #e6e6e6;
`;

const NumberInput = styled.input<{ $center?: boolean }>`
  flex: 1;
  width: 20px;
  text-align: ${p => (p.$center ? 'center' : 'right')};
`;

const Ruler = styled.div`
  display: grid;
  flex: none;
  grid-template-columns: repeat(25, minmax(0, 1fr));
  height: 23px;
  padding: 0 29px 0 81px;
  background: #2a2a2a;
  color: #a0a0a0;
  font: 11px/24px ${TITLE_FONT};
  text-align: center;
`;

const Track = styled.div`
  display: grid;
  flex: 1;
  grid-template-columns: 53px repeat(24, minmax(0, 1fr));
  margin: 0 57px 0 57px;
  border-right: 2px solid #111;
  background: #434343;
`;

const TrackCell = styled.span`
  border-right: 1px solid #2c2c2c;
  background: linear-gradient(#3a3a3a, #3a3a3a) 50% 0 / 1px 100% no-repeat;
  &:last-child { border-right: 0; }
`;

const ScrollBar = styled.div`
  display: flex;
  flex: none;
  align-items: center;
  justify-content: space-between;
  height: 9px;
  margin: 0 7px 1px 8px;
  padding: 0 1px;
  border-radius: 5px;
  background: #686868;
`;

const ScrollKnob = styled.span`
  width: 7px;
  height: 7px;
  border: 1px solid #888;
  border-radius: 50%;
  background: #333;
`;

const Playhead = styled.div`
  position: absolute;
  top: 28px;
  bottom: 0;
  left: 45px;
  width: 25px;
  background: linear-gradient(#5680c2, #5680c2) 50% 0 / 2px 100% no-repeat;
  pointer-events: none;
`;

const PlayheadFrame = styled.div`
  height: 17px;
  border-radius: 4px;
  background: #5078b8;
  color: #fff;
  line-height: 18px;
  text-align: center;
`;

const EdgeArrow = styled.span<{ $side: 'left' | 'right' }>`
  position: absolute;
  top: 40px;
  ${p => p.$side}: -1px;
  color: #999;
  font: 11px/14px ${TITLE_FONT};
`;

const TimelineEditor = () => (
  <Timeline>
    <TimelineHeader>
      <IconDropdown label="Editor type" icon="clock" outlined />
      <TimelineMenus>
        <LabeledDrop label="Playback" w={68} indent={4} options={['Playback']} outlined />
        <LabeledDrop label="Keying" w={58} indent={4} options={['Keying']} outlined />
        <PlainMenu>View</PlainMenu>
        <PlainMenu>Marker</PlainMenu>
      </TimelineMenus>
      <Transport>
        <Joined>
          <Cell $tone="grey" aria-label="Auto keying"><Icon name="dot" /></Cell>
          <Cell $tone="dim" aria-label="Auto keying options"><Icon name="chevron" size={10} /></Cell>
        </Joined>
        <Joined>
          {['first', 'prevkey', 'playback', 'play', 'nextkey', 'last'].map(n => (
            <Cell key={n} $tone="grey" $w={19} aria-label={n}><Icon name={n} size={15} /></Cell>
          ))}
        </Joined>
      </Transport>
      <FrameFields>
        <NumberField $w={73} $solo><NumberInput $center aria-label="Current frame" defaultValue="1" /></NumberField>
        <Joined>
          <Cell $tone="grey" aria-label="Preview range"><Icon name="stopwatch" size={16} /></Cell>
          <NumberField $w={87}>Start<NumberInput defaultValue="1" /></NumberField>
          <NumberField $w={83}>End<NumberInput defaultValue="250" /></NumberField>
        </Joined>
      </FrameFields>
    </TimelineHeader>
    <Ruler>{range(10, 250, 10).map(n => <span key={n}>{n}</span>)}</Ruler>
    <Track>{range(1, 25, 1).map(n => <TrackCell key={n} />)}</Track>
    <ScrollBar><ScrollKnob /><ScrollKnob /></ScrollBar>
    <Playhead><PlayheadFrame>1</PlayheadFrame></Playhead>
    <EdgeArrow $side="left">›</EdgeArrow>
    <EdgeArrow $side="right">‹</EdgeArrow>
  </Timeline>
);

/* ---------- outliner + properties ---------- */

const RightColumn = styled.div`
  display: grid;
  grid-template-rows: 323px minmax(0, 1fr);
  gap: 3px;
  min-width: 0;
`;

const Editor = styled.section`
  display: flex;
  flex-direction: column;
  min-height: 0;
  border-radius: 5px;
  background: #282828;
  overflow: hidden;
`;

const EditorHeader = styled.div`
  display: grid;
  flex: none;
  grid-template-columns: 1fr auto 1fr;
  align-items: center;
  height: 25px;
  padding: 0 8px 1px 9px;
  background: #3b3b3b;
`;

const HeaderGroup = styled.div<{ $end?: boolean }>`
  display: flex;
  gap: 7px;
  justify-content: ${p => (p.$end ? 'flex-end' : 'flex-start')};
`;

const SquareButton = styled.button<{ $dark?: boolean }>`
  display: grid;
  place-items: center;
  width: 18px;
  height: 18px;
  border-radius: 3px;
  background: ${p => (p.$dark ? '#2b2b2b' : '#545454')};
  box-shadow: 0 0 0 1px #484848;
`;

const Tree = styled.ul`
  flex: 1;
  margin: 0;
  padding: 2px 0 0;
  list-style: none;
  background: repeating-linear-gradient(#282828 0 20px, #2b2b2b 20px 40px) 0 2px;
  color: #c4c4c4;
`;

const TreeRow = styled.li<{ $depth: number }>`
  display: flex;
  align-items: center;
  gap: 5px;
  height: 20px;
  padding: 1px 9px 0 ${p => 21 + p.$depth * 20}px;
`;

const TreeIcon = styled.span<{ $lit?: boolean }>`
  display: grid;
  place-items: center;
  width: 18px;
  height: 18px;
  border-radius: 4px;
  background: ${p => (p.$lit ? '#585858' : 'none')};
  color: #ddd;
`;

const Check = styled.input<{ $blue?: boolean }>`
  appearance: none;
  display: grid;
  place-items: center;
  width: ${p => (p.$blue ? 12 : 10)}px;
  height: ${p => (p.$blue ? 12 : 10)}px;
  border-radius: 2px;
  background: ${p => (p.$blue ? '#4772b3' : '#ddd')};
  color: ${p => (p.$blue ? '#fff' : '#222')};
  &::before {
    content: '';
    width: 7px;
    height: 4px;
    margin-bottom: 2px;
    border-left: 2px solid;
    border-bottom: 2px solid;
    transform: rotate(-45deg);
  }
`;

const RowEnd = styled.span`
  display: flex;
  align-items: center;
  gap: 8px;
  margin-left: auto;
`;

const PropsBody = styled.div`
  display: flex;
  flex: 1;
  min-height: 0;
`;

const PropTabs = styled.div`
  display: flex;
  flex-direction: column;
  width: 28px;
  gap: 3px;
  padding: 9px 0 0 2px;
  background: #222;
`;

const PropTab = styled.button<{ $active?: boolean; $red?: boolean; $space?: number }>`
  display: grid;
  place-items: center;
  width: 26px;
  height: 25px;
  margin-top: ${p => p.$space ?? 0}px;
  border-radius: 4px 0 0 4px;
  background: ${p => (p.$active ? '#424242' : '#2a2a2a')};
  color: ${p => (p.$red ? '#c4576a' : p.$active ? '#eee' : '#c0c0c0')};
`;

const PropContent = styled.div`
  flex: 1;
  background: #424242;
`;

const Crumbs = styled.div`
  display: flex;
  align-items: center;
  height: 36px;
  padding: 1px 10px 0;
`;

const Crumb = styled.span`
  display: flex;
  gap: 9px;
`;

const CrumbArrow = styled(Triangle)`
  width: 4px;
  margin: 0 15px 0 13px;
  background: #2a2a2a;
`;

const PinButton = styled.button`
  margin-left: auto;
  color: #999;
`;

const Section = styled(PanelTitle)`
  gap: 6px;
  padding: 2px 7px 0 9px;
  background: none;
  color: #ccc;
`;

const SectionLabel = styled.label`
  display: flex;
  align-items: center;
  gap: 4px;
  margin-left: -1px;
`;

const Fields = styled.div`
  display: grid;
  grid-template-columns: 118px 166px;
  gap: 7px 11px;
  padding: 9px 8px 9px 0;
  background: #393939;
`;

const FieldLabel = styled.label`
  line-height: 18px;
  text-align: right;
  color: #e0e0e0;
`;

const IdField = styled.div`
  display: flex;
  align-items: center;
  height: 18px;
  padding: 0 4px;
  border-radius: 4px;
  background: #1d1d1d;
  box-shadow: 0 0 0 1px #4a4a4a;
  color: #eee;
`;

const OutlinerEditor = () => (
  <Editor>
    <EditorHeader>
      <HeaderGroup>
        <IconDropdown label="Editor type" icon="outliner" outlined />
        <IconDropdown label="Display mode" icon="layers" outlined />
      </HeaderGroup>
      <Search><Icon name="search" size={15} /><SearchInput aria-label="Filter outliner" /></Search>
      <HeaderGroup $end>
        <IconDropdown label="Filter" icon="filter" outlined />
        <SquareButton aria-label="New collection"><Icon name="newcol" /></SquareButton>
      </HeaderGroup>
    </EditorHeader>
    <Tree>
      <TreeRow $depth={0}><TreeIcon><Icon name="collection" /></TreeIcon>Scene Collection</TreeRow>
      <TreeRow $depth={1}>
        <TreeIcon $lit><Icon name="collection" /></TreeIcon>Collection
        <RowEnd>
          <Check type="checkbox" defaultChecked aria-label="Include collection" />
          <Icon name="eye" />
        </RowEnd>
      </TreeRow>
    </Tree>
  </Editor>
);

const propTabs: { n: string; active?: boolean; red?: boolean; space?: number }[] = [
  { n: 'tools' },
  { n: 'render', space: 7 },
  { n: 'output' },
  { n: 'layers' },
  { n: 'scene', active: true },
  { n: 'world', red: true },
  { n: 'texture', red: true, space: 16 },
];

const PropertiesEditor = () => (
  <Editor>
    <EditorHeader>
      <HeaderGroup><IconDropdown label="Editor type" icon="properties" outlined /></HeaderGroup>
      <Search><Icon name="search" size={15} /><SearchInput aria-label="Search properties" /></Search>
      <HeaderGroup $end><SquareButton $dark aria-label="Options"><Icon name="chevron" size={12} /></SquareButton></HeaderGroup>
    </EditorHeader>
    <PropsBody>
      <PropTabs>
        {propTabs.map(t => <PropTab key={t.n} aria-label={t.n} $active={t.active} $red={t.red} $space={t.space}><Icon name={t.n} /></PropTab>)}
      </PropTabs>
      <PropContent>
        <Crumbs>
          <Crumb><Icon name="scene" size={15} />Scene</Crumb>
          <CrumbArrow />
          <Crumb><Icon name="layers" size={15} />View Layer</Crumb>
          <PinButton aria-label="Pin"><Icon name="pin" /></PinButton>
        </Crumbs>
        <Section><Triangle $open />Scene<Grip /></Section>
        <Fields>
          <FieldLabel htmlFor="camera">Camera</FieldLabel>
          <IdField><Icon name="object" /><SearchInput id="camera" /><Icon name="dropper" /></IdField>
          <FieldLabel htmlFor="bg">Background Scene</FieldLabel>
          <IdField><Icon name="scene" /><SearchInput id="bg" /></IdField>
          <FieldLabel htmlFor="clip">Active Clip</FieldLabel>
          <IdField><Icon name="clip" /><SearchInput id="clip" /></IdField>
        </Fields>
        {['Units', 'Gravity', 'Keying Sets', 'Audio', 'Rigid Body World', 'Custom Properties'].map(s => (
          <Section key={s}>
            <Triangle />
            {s === 'Gravity' ? <SectionLabel><Check type="checkbox" $blue defaultChecked />{s}</SectionLabel> : s}
            <Grip />
          </Section>
        ))}
      </PropContent>
    </PropsBody>
  </Editor>
);

/* ---------- status bar ---------- */

const StatusBar = styled.footer`
  display: flex;
  align-items: center;
  gap: 9px;
  padding: 1px 8px 0 9px;
  background: #303030;
  color: #aaa;
`;

const KeyCap = styled.kbd`
  height: 15px;
  padding: 0 1px;
  border: 1px solid #aaa;
  border-radius: 3px;
  font: 10px/13px ${UI_FONT};
`;

const Version = styled.span`
  margin-left: auto;
`;

const Taskbar = styled.div`
  background:
    linear-gradient(#6f9fc4, #6f9fc4) 24px 0 / 18px 2px no-repeat,
    linear-gradient(#3a3a3a, #3a3a3a) 509px 0 / 48px 2px no-repeat,
    #000;
`;

export default function App() {
  return (
    <Page>
      <GlobalStyle />
      <TitleBar>
        <OrangeLogo><Icon name="blender" size={15} /></OrangeLogo>
        Blender
        <WindowButtons>
          <WindowButton aria-label="Minimize"><IconSvg $size={10} viewBox="0 0 10 10"><path d="M0 5.500h10" stroke="#000" /></IconSvg></WindowButton>
          <WindowButton aria-label="Restore"><IconSvg $size={10} viewBox="0 0 10 10"><path d="M.5 2.500h7v7h-7zM2.500 2.500v-2h7v7h-2" fill="none" stroke="#000" /></IconSvg></WindowButton>
          <WindowButton aria-label="Close"><IconSvg $size={10} viewBox="0 0 10 10"><path d="m0 0 10 10M10 0 0 10" stroke="#000" /></IconSvg></WindowButton>
        </WindowButtons>
      </TitleBar>
      <TopBar>
        <Icon name="blender" size={16} />
        <AppMenu>
          {['File', 'Edit', 'Render', 'Window', 'Help'].map(m => <MenuButton key={m}>{m}</MenuButton>)}
        </AppMenu>
        <Workspaces>
          {['Layout', 'Modeling', 'Sculpting', 'UV Editing', 'Texture Paint', 'Shading', 'Animation', 'Rendering', 'Compositing', 'Scripting'].map(w => (
            <Workspace key={w} $active={w === 'Layout'}>{w}</Workspace>
          ))}
          <AddWorkspace aria-label="Add workspace"><Icon name="plus" /></AddWorkspace>
        </Workspaces>
        <IdBlocks>
          {[['scene', 'Scene'], ['layers', 'View Layer']].map(([icon, value]) => (
            <IdBlock key={value}>
              <IdButton $wide aria-label={`Browse ${value}`}><Icon name={icon} /><Icon name="chevron" size={12} /></IdButton>
              <IdInput aria-label={value} defaultValue={value} />
              <IdButton aria-label={`New ${value}`}><Icon name="copy" /></IdButton>
              <IdButton $dim aria-label={`Remove ${value}`}><Icon name="close" /></IdButton>
            </IdBlock>
          ))}
        </IdBlocks>
      </TopBar>
      <Workarea>
        <LeftColumn>
          <ViewportEditor />
          <TimelineEditor />
        </LeftColumn>
        <RightColumn>
          <OutlinerEditor />
          <PropertiesEditor />
        </RightColumn>
      </Workarea>
      <StatusBar>
        <KeyCap>Alt</KeyCap>Axis Snap
        <Version>2.92.0</Version>
      </StatusBar>
      <Taskbar />
    </Page>
  );
}
